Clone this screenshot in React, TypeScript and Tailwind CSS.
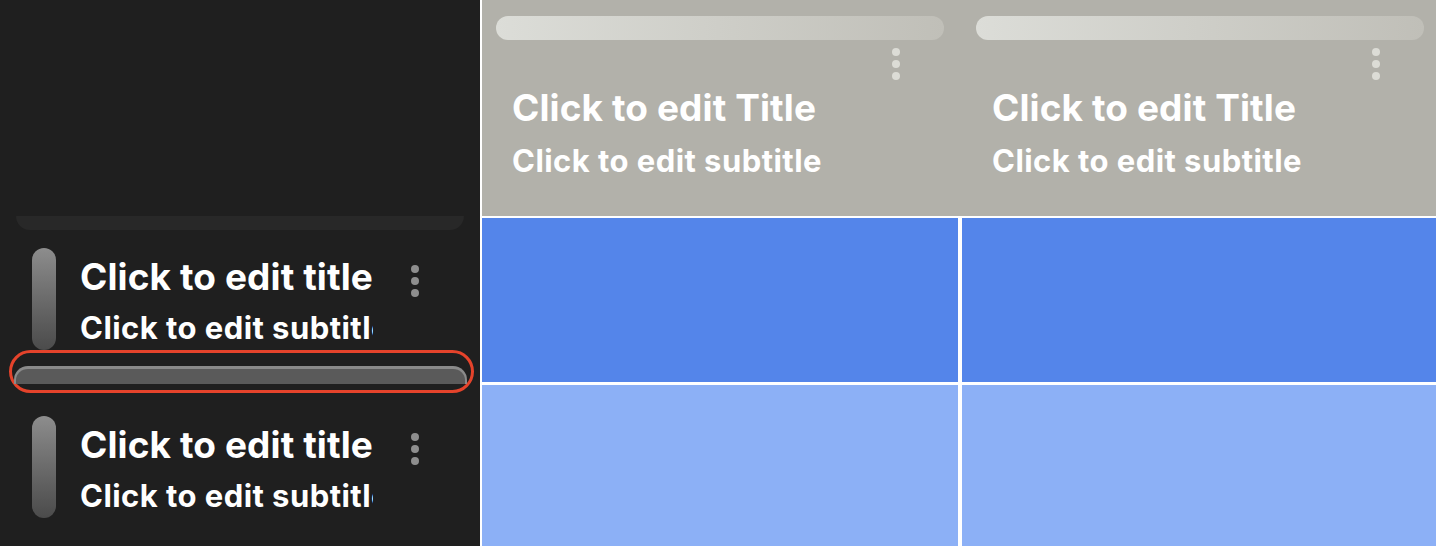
import React from 'react';

const font = { fontFamily: 'Inter, "Noto Sans", sans-serif' };

function Dots({ light }: { light?: boolean }) {
  const c = light ? 'bg-[#dcdcd6]' : 'bg-[#8e8e8e]';
  return (
    <div className="flex flex-col gap-[4px]">
      <span className={`block h-2 w-2 rounded-full ${c}`} />
      <span className={`block h-2 w-2 rounded-full ${c}`} />
      <span className={`block h-2 w-2 rounded-full ${c}`} />
    </div>
  );
}

function ListRow() {
  return (
    <div className="flex h-[102px] items-start">
      <div className="ml-8 h-[102px] w-6 shrink-0 rounded-full bg-gradient-to-b from-[#8d8d8d] to-[#4b4b4b]" />
      <div className="ml-[24px] w-[293px] shrink-0 overflow-hidden whitespace-nowrap pt-[7px] text-white">
        <div className="text-[37px] font-bold leading-[44px] tracking-[0.1px]">Click to edit title</div>
        <div className="mt-[11px] text-[31px] font-bold leading-[36px] tracking-[0.45px]">Click to edit subtitle</div>
      </div>
      <div className="ml-[38px] mt-[17px]">
        <Dots />
      </div>
    </div>
  );
}

function HeaderCell({ last }: { last?: boolean }) {
  return (
    <div className="flex flex-col">
      <div
        className={`mt-4 h-6 rounded-full bg-gradient-to-r from-[#dcddd8] to-[#c0bfb8] ${last ? 'ml-4 mr-3' : 'ml-[14px] mr-4'}`}
      />
      <div className={`mt-2 ${last ? 'ml-[412px]' : 'ml-[410px]'}`}>
        <Dots light />
      </div>
      <div className={`mt-[6px] whitespace-nowrap text-white ${last ? 'ml-[32px]' : 'ml-[30px]'}`}>
        <div className="text-[37px] font-bold leading-[44px] tracking-[0.1px]">Click to edit Title</div>
        <div className="mt-[13px] text-[31px] font-bold leading-[36px] tracking-[0.45px]">Click to edit subtitle</div>
      </div>
    </div>
  );
}

export default function App() {
  return (
    <div className="flex h-[546px] w-[1436px] overflow-hidden bg-white" style={font}>
      <aside className="w-[480px] shrink-0 bg-[#1f1f1f]">
        <div className="h-[216px]" />
        <div className="mx-4 h-[14px] rounded-b-[14px] bg-[#282828]" />
        <div className="mt-[18px]">
          <ListRow />
        </div>
        {/* selected drop target */}
        <div className="ml-[9px] h-[43px] w-[465px] rounded-[22px] border-[3px] border-[#e5432b] pt-[13px]">
          <div className="ml-[2px] mr-[4px] h-[18px] rounded-t-[14px] border-x-[2px] border-t-[3px] border-[#8a8a8a] bg-[#5a5a5a]" />
        </div>
        <div className="mt-[23px]">
          <ListRow />
        </div>
      </aside>

      <main className="ml-[2px] flex flex-1 flex-col">
        <div className="grid h-[216px] grid-cols-[478px_1fr] bg-[#b2b1aa]">
          <HeaderCell />
          <HeaderCell last />
        </div>
        <div className="mt-[2px] grid flex-1 grid-cols-[476px_1fr] grid-rows-[164px_1fr] gap-x-[4px] gap-y-[3px]">
          <div className="bg-[#5485ea]" />
          <div className="bg-[#5485ea]" />
          <div className="bg-[#8cb0f6]" />
          <div className="bg-[#8cb0f6]" />
        </div>
      </main>
    </div>
  );
}
